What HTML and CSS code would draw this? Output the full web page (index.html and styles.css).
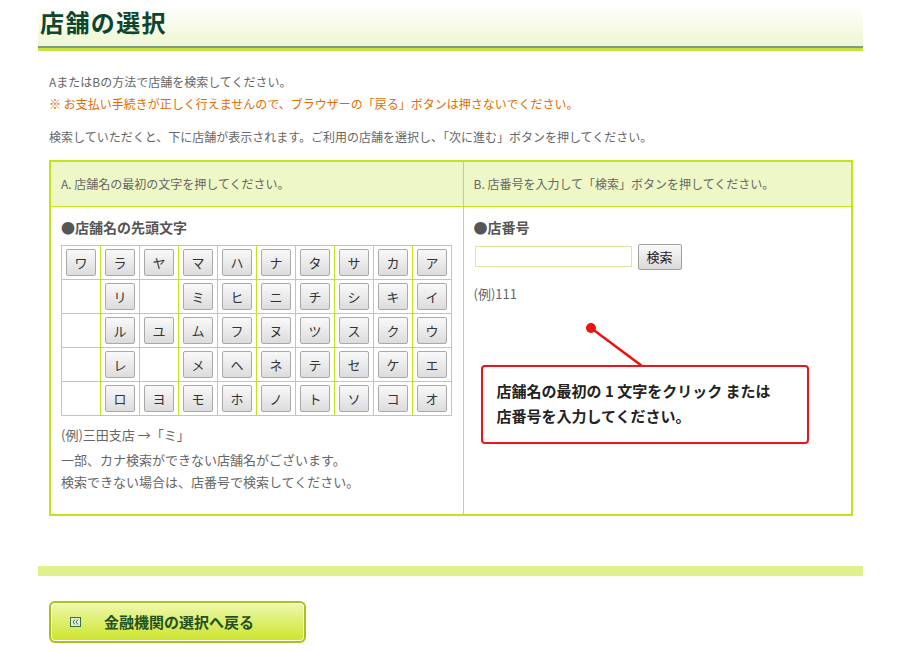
FILE: index.html
```html
<!DOCTYPE html>
<html lang="ja">

<head>
    <meta charset="utf-8">
    <meta name="viewport" content="width=device-width, initial-scale=1.0">
    <title>店舗の選択</title>
    <link rel="stylesheet" href="styles.css">
</head>

<body>

    <div class="wrap">

        <header class="page_head">
            <h1>店舗の選択</h1>
        </header>

        <section class="intro">
            <p>AまたはBの方法で店舗を検索してください。</p>
            <p class="warn">※ お支払い手続きが正しく行えませんので、ブラウザーの「戻る」ボタンは押さないでください。</p>
            <p class="lead">検索していただくと、下に店舗が表示されます。ご利用の店舗を選択し、「次に進む」ボタンを押してください。</p>
        </section>

        <table class="search">
            <tr>
                <th class="col_a">A. 店舗名の最初の文字を押してください。</th>
                <th class="col_b">B. 店番号を入力して「検索」ボタンを押してください。</th>
            </tr>
            <tr>
                <td class="col_a">
                    <h2>●店舗名の先頭文字</h2>

                    <table class="kana">
                        <tr>
                            <td><button>ワ</button></td>
                            <td><button>ラ</button></td>
                            <td><button>ヤ</button></td>
                            <td><button>マ</button></td>
                            <td><button>ハ</button></td>
                            <td><button>ナ</button></td>
                            <td><button>タ</button></td>
                            <td><button>サ</button></td>
                            <td><button>カ</button></td>
                            <td><button>ア</button></td>
                        </tr>
                        <tr>
                            <td></td>
                            <td><button>リ</button></td>
                            <td></td>
                            <td><button>ミ</button></td>
                            <td><button>ヒ</button></td>
                            <td><button>ニ</button></td>
                            <td><button>チ</button></td>
                            <td><button>シ</button></td>
                            <td><button>キ</button></td>
                            <td><button>イ</button></td>
                        </tr>
                        <tr>
                            <td></td>
                            <td><button>ル</button></td>
                            <td><button>ユ</button></td>
                            <td><button>ム</button></td>
                            <td><button>フ</button></td>
                            <td><button>ヌ</button></td>
                            <td><button>ツ</button></td>
                            <td><button>ス</button></td>
                            <td><button>ク</button></td>
                            <td><button>ウ</button></td>
                        </tr>
                        <tr>
                            <td></td>
                            <td><button>レ</button></td>
                            <td></td>
                            <td><button>メ</button></td>
                            <td><button>ヘ</button></td>
                            <td><button>ネ</button></td>
                            <td><button>テ</button></td>
                            <td><button>セ</button></td>
                            <td><button>ケ</button></td>
                            <td><button>エ</button></td>
                        </tr>
                        <tr>
                            <td></td>
                            <td><button>ロ</button></td>
                            <td><button>ヨ</button></td>
                            <td><button>モ</button></td>
                            <td><button>ホ</button></td>
                            <td><button>ノ</button></td>
                            <td><button>ト</button></td>
                            <td><button>ソ</button></td>
                            <td><button>コ</button></td>
                            <td><button>オ</button></td>
                        </tr>
                    </table>

                    <p class="note first">(例)三田支店 →「ミ」</p>
                    <p class="note">一部、カナ検索ができない店舗名がございます。</p>
                    <p class="note">検索できない場合は、店番号で検索してください。</p>
                </td>

                <td class="col_b">
                    <h2>●店番号</h2>
                    <div class="num_row">
                        <input type="text" class="num_input">
                        <button class="num_btn">検索</button>
                    </div>
                    <p class="note ex">(例)111</p>

                    <!-- 吹き出し -->
                    <svg class="pointer" width="200" height="170" viewBox="0 0 200 170">
                        <line x1="127" y1="121" x2="178" y2="159" stroke="#ee1111" stroke-width="2.5" />
                        <circle cx="127" cy="121" r="5" fill="#ee1111" />
                    </svg>
                    <div class="balloon">
                        店舗名の最初の 1 文字をクリック または<br>
                        店番号を入力してください。
                    </div>
                </td>
            </tr>
        </table>

        <div class="bar"></div>

        <a class="back_btn" href="#">
            <svg class="back_icon" width="11" height="10" viewBox="0 0 11 10">
                <rect x="0.5" y="0.5" width="10" height="9" fill="#e4ecd6" stroke="#3f6e44" />
                <path d="M5 2.5 L3 5 L5 7.5 M8 2.5 L6 5 L8 7.5" fill="none" stroke="#3f6e44" stroke-width="1" />
            </svg>
            <span>金融機関の選択へ戻る</span>
        </a>

    </div>

</body>

</html>
```

FILE: styles.css
```css
* {
    box-sizing: border-box;
}

body {
    margin: 0;
    background-color: white;
    font-family: "Noto Sans CJK JP", "Liberation Sans", sans-serif;
    color: #666666;
}

p, h1, h2 {
    margin: 0;
}

.wrap {
    width: 825px;
    margin-left: 38px;
}

/* 見出し */
.page_head {
    height: 48px;
    padding: 7px 0 0 2px;
    background: linear-gradient(#ffffff 10%, #eef6d2);
    border-bottom: 2px solid #7f9a86;
    box-shadow: 0 3px 0 #c9e23c;
}

.page_head h1 {
    font-size: 24px;
    line-height: 30px;
    letter-spacing: 1.4px;
    color: #0c4630;
}

.intro {
    padding: 23px 0 0 11px;
    font-size: 12px;
    line-height: 22px;
}

.intro .warn {
    color: #e06c00;
}

.intro .lead {
    margin-top: 11px;
}

/* 検索テーブル */
.search {
    width: 804px;
    margin: 12px 0 0 11px;
    border-collapse: collapse;
    border: 2px solid #c4e31e;
}

.search th,
.search td.col_a,
.search td.col_b {
    border: 1px solid #c4e31e;
    text-align: left;
    vertical-align: top;
}

.search th {
    height: 45px;
    padding: 0 10px;
    background-color: #eef7c6;
    font-size: 12px;
    font-weight: normal;
    vertical-align: middle;
}

.search .col_a {
    width: 413px;
}

.search td.col_a,
.search td.col_b {
    padding: 10px 10px 21px 10px;
}

.search td.col_b {
    position: relative;
}

.search h2 {
    font-size: 14px;
    line-height: 20px;
    color: #555555;
    font-weight: bold;
}

.kana {
    margin-top: 8px;
    border-collapse: collapse;
}

.kana td {
    width: 39px;
    height: 34px;
    padding: 0;
    border: 1px solid #c4e31e;
    text-align: center;
    vertical-align: middle;
}

.kana button {
    width: 30px;
    height: 27px;
    padding: 0;
    border: 1px solid #a9a9a9;
    border-radius: 2px;
    background: linear-gradient(#f9f9f9, #dcdcdc);
    font-family: "Noto Sans CJK JP", sans-serif;
    font-size: 13px;
    color: #333333;
}

.note {
    font-size: 13px;
    line-height: 22px;
}

.note.first {
    margin: 8px 0 3px 0;
}

.num_row {
    display: flex;
    align-items: center;
    gap: 6px;
    margin-top: 7px;
}

.num_input {
    width: 157px;
    height: 21px;
    margin-left: 1px;
    border: 1px solid #d6e8a4;
}

.num_btn {
    width: 44px;
    height: 26px;
    padding: 0;
    border: 1px solid #a0a0a0;
    border-radius: 2px;
    background: linear-gradient(#f9f9f9, #dadada);
    font-family: "Noto Sans CJK JP", sans-serif;
    font-size: 13px;
    color: #222222;
}

.note.ex {
    margin-top: 13px;
}

.pointer {
    position: absolute;
    top: 0;
    left: 0;
    pointer-events: none;
}

.balloon {
    position: absolute;
    left: 17px;
    top: 158px;
    width: 328px;
    height: 79px;
    padding: 11px 0 0 14px;
    border: 2px solid #e8141e;
    border-radius: 4px;
    background-color: white;
    font-size: 15px;
    line-height: 25px;
    font-weight: bold;
    color: #222222;
}

/* 下部 */
.bar {
    height: 10px;
    margin-top: 50px;
    background-color: #dff08c;
}

.back_btn {
    display: flex;
    align-items: center;
    width: 257px;
    height: 42px;
    margin: 25px 0 0 11px;
    padding-left: 19px;
    border: 2px solid #a6c21c;
    border-radius: 6px;
    box-shadow: inset 0 0 0 1px #ffffff;
    background: linear-gradient(#eef9ae, #cbe42a);
    text-decoration: none;
}

.back_icon {
    margin-right: 23px;
}

.back_btn span {
    font-size: 15px;
    font-weight: bold;
    color: #24501f;
}
```
